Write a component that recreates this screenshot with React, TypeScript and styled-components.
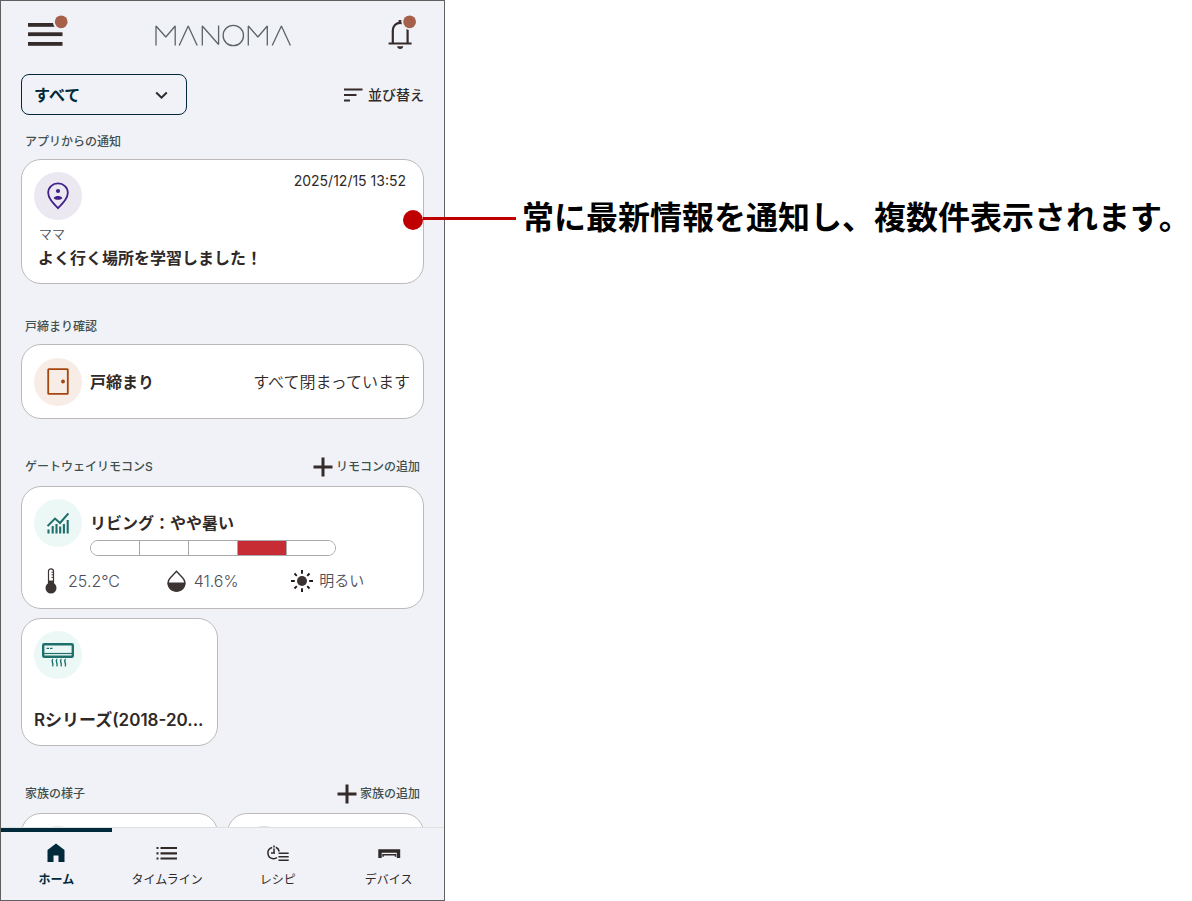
import React from "react";
import styled, { createGlobalStyle } from "styled-components";

const color = {
  page: "#ffffff",
  screen: "#f1f2f7",
  ink: "#2f2928",
  navy: "#00293a",
  label: "#3f504f",
  muted: "#4b505c",
  cardBorder: "#bdb9ba",
  badge: "#a65f4b",
  callout: "#c00000",
  teal: "#1f6f6b",
};

const GlobalStyle = createGlobalStyle`
  *, *::before, *::after { box-sizing: border-box; }
  body {
    margin: 0;
    background: ${color.page};
    color: ${color.ink};
    font-family: Inter, "Noto Sans CJK JP", sans-serif;
    overflow-x: hidden;
  }
  button, select { font: inherit; color: inherit; }
  svg { display: block; flex: none; }
`;

const Page = styled.div`
  display: flex;
  align-items: flex-start;
  height: 100vh;
  overflow: hidden;
`;

const Phone = styled.div`
  flex: 0 0 445px;
  display: flex;
  flex-direction: column;
  height: 100%;
  border: 1px solid #606060;
  background: ${color.screen};
`;

const Header = styled.header`
  display: grid;
  grid-template-columns: 1fr auto 1fr;
  align-items: start;
  height: 73px;
  flex: none;
  padding: 14px 27px 0;
`;

const IconButton = styled.button<{ $end?: boolean }>`
  display: block;
  justify-self: ${(p) => (p.$end ? "end" : "start")};
  padding: 0;
  border: 0;
  background: none;
  cursor: pointer;
`;

const Logo = styled.svg`
  margin-top: 8px;
`;

const Content = styled.main`
  flex: 1;
  min-height: 0;
  padding: 0 20px;
  overflow: hidden auto;
  scrollbar-width: none;
`;

const FilterRow = styled.div`
  display: flex;
  justify-content: space-between;
  align-items: center;
  margin-bottom: 8px;
`;

const SelectBox = styled.label`
  position: relative;
  display: block;
  width: 166px;
  svg {
    position: absolute;
    right: 19px;
    top: 17px;
    pointer-events: none;
  }
`;

const Select = styled.select`
  display: block;
  appearance: none;
  width: 100%;
  height: 41px;
  padding: 0 40px 0 12px;
  border: 1px solid ${color.navy};
  border-radius: 8px;
  background: transparent;
  color: ${color.navy};
  font-size: 16px;
  font-weight: 700;
`;

const SortButton = styled.button`
  display: flex;
  align-items: center;
  gap: 5px;
  padding: 0;
  border: 0;
  background: none;
  font-size: 14px;
  font-weight: 500;
  line-height: 20px;
  cursor: pointer;
`;

const Section = styled.section`
  & + & {
    margin-top: 24px;
  }
`;

const SectionHead = styled.div<{ $action?: boolean }>`
  display: flex;
  justify-content: space-between;
  align-items: center;
  height: ${(p) => (p.$action ? 43 : 36)}px;
  padding: ${(p) => (p.$action ? 5 : 2)}px 4px 0;
`;

const SectionTitle = styled.h2`
  margin: 0;
  color: ${color.label};
  font-size: 12px;
  font-weight: 500;
  line-height: 20px;
`;

const AddButton = styled.button`
  display: flex;
  align-items: center;
  gap: 3px;
  padding: 0;
  border: 0;
  background: none;
  color: ${color.label};
  font-size: 12px;
  font-weight: 500;
  line-height: 20px;
  cursor: pointer;
`;

const Card = styled.article<{ $height: number }>`
  display: flex;
  flex-direction: column;
  min-height: ${(p) => p.$height}px;
  padding: 12px;
  border: 1px solid ${color.cardBorder};
  border-radius: 20px;
  background: #fff;
`;

const CardGrid = styled.div`
  display: grid;
  grid-template-columns: 1fr 1fr;
  gap: 9px;
`;

const GridBelow = styled(CardGrid)`
  margin-top: 9px;
`;

const CardRow = styled.div<{ $top?: boolean }>`
  display: flex;
  align-items: ${(p) => (p.$top ? "flex-start" : "center")};
  gap: 8px;
`;

const DoorRow = styled(CardRow)`
  flex: 1;
  padding-right: 1px;
`;

const IconDisc = styled.span<{ $tint: string }>`
  display: grid;
  place-items: center;
  flex: none;
  width: 48px;
  height: 48px;
  border-radius: 50%;
  background: ${(p) => p.$tint};
`;

const Time = styled.time`
  margin-left: auto;
  padding-right: 5px;
  font-size: 14px;
  line-height: 18px;
`;

const Sender = styled.p`
  margin: 4px 0 0 5px;
  color: ${color.muted};
  font-size: 13px;
  font-weight: 350;
  line-height: 20px;
`;

const Title = styled.h3`
  margin: 0;
  overflow: hidden;
  white-space: nowrap;
  text-overflow: ellipsis;
  font-size: 16px;
  font-weight: 600;
  line-height: 26px;
`;

const MessageTitle = styled(Title)`
  margin-top: 1px;
  padding-left: 4px;
`;

const DeviceTitle = styled(Title)`
  margin-top: auto;
  font-size: 17px;
`;

const Status = styled.span`
  margin-left: auto;
  font-size: 16px;
  font-weight: 350;
  line-height: 26px;
`;

const Comfort = styled.div`
  padding-top: 11px;
`;

const Meter = styled.div`
  display: flex;
  width: 246px;
  height: 16px;
  margin-top: 4px;
  overflow: hidden;
  border: 1px solid #aaa8aa;
  border-radius: 8px;
`;

const MeterStep = styled.span<{ $on?: boolean }>`
  flex: 1;
  background: ${(p) => (p.$on ? "#c72c34" : "#fff")};
  & + & {
    border-left: 1px solid #aaa8aa;
  }
`;

const Readings = styled.ul`
  display: grid;
  grid-template-columns: repeat(3, 1fr);
  margin: 12px 0 0;
  padding: 0;
  list-style: none;
`;

const Reading = styled.li<{ $japanese?: boolean }>`
  display: flex;
  align-items: center;
  gap: 6px;
  padding-left: 6px;
  color: ${color.muted};
  font-size: ${(p) => (p.$japanese ? 15 : 16)}px;
  font-weight: 350;
  line-height: 26px;
`;

const TabBar = styled.nav`
  display: grid;
  grid-template-columns: repeat(4, 1fr);
  flex: none;
  height: 73px;
  border-top: 1px solid #dfe0e4;
`;

const Tab = styled.a<{ $active?: boolean }>`
  display: flex;
  flex-direction: column;
  align-items: center;
  border-top: 4px solid ${(p) => (p.$active ? color.navy : "transparent")};
  padding-top: 9px;
  gap: 5px;
  color: ${(p) => (p.$active ? color.navy : color.ink)};
  font-size: 12px;
  font-weight: ${(p) => (p.$active ? 700 : 400)};
  line-height: 20px;
  text-decoration: none;
`;

const Aside = styled.aside`
  flex: 1;
  min-width: 0;
  padding: 198px 0 0 77px;
`;

const Note = styled.p`
  position: relative;
  margin: 0;
  color: #000;
  font-size: 32px;
  font-weight: 700;
  line-height: 40px;
  white-space: nowrap;
`;

/* Leader line that reaches from the note back over the notification card. */
const Leader = styled.span`
  position: absolute;
  right: calc(100% + 6px);
  top: 12px;
  display: flex;
  align-items: center;
  width: 113px;
  height: 20px;
  &::before {
    content: "";
    width: 20px;
    height: 20px;
    border-radius: 50%;
    background: ${color.callout};
  }
  &::after {
    content: "";
    flex: 1;
    height: 3px;
    margin-bottom: 3px;
    background: ${color.callout};
  }
`;

const MenuIcon = () => (
  <svg width="44" height="34" viewBox="0 0 44 34" aria-hidden="true">
    <g fill="#352b2b">
      <rect y="8" width="34.5" height="3.8" />
      <rect y="17.3" width="34.5" height="3.8" />
      <rect y="27" width="34.5" height="3.8" />
    </g>
    <circle cx="33.2" cy="6.8" r="8.4" fill={color.screen} />
    <circle cx="33.2" cy="6.8" r="6.4" fill={color.badge} />
  </svg>
);

const BellIcon = () => (
  <svg width="30" height="36" viewBox="0 0 30 36" aria-hidden="true">
    <path
      d="M5.8 28.5V15.5C5.8 11 9 7.8 13.2 7.8S20.6 11 20.6 15.5V28.5M1.6 28.5H24.6"
      fill="none"
      stroke="#352b2b"
      strokeWidth="2.2"
    />
    <path d="M11.6 5h3v4h-3zM10.2 31.2h6c0 1.7-1.3 2.8-3 2.8s-3-1.1-3-2.8z" fill="#352b2b" />
    <circle cx="22.6" cy="6.8" r="8.2" fill={color.screen} />
    <circle cx="22.6" cy="6.8" r="6.4" fill={color.badge} />
  </svg>
);

const Brand = () => (
  <Logo width="138" height="24" viewBox="0 0 138 24" role="img" aria-label="MANOMA">
    <g fill="none" stroke="#5b6365" strokeWidth="1.3" strokeLinejoin="bevel">
      <polyline points="2,22.5 2,3 11.8,14 21.2,3 21.2,22.5" />
      <polyline points="25.2,22.5 34.2,3 43.2,22.5" />
      <polyline points="48.3,22.5 48.3,3 64.6,21.5 64.6,2.5" />
      <circle cx="79.3" cy="12.5" r="10.2" />
      <polyline points="94.3,22.5 94.3,3 103.9,14 113.3,3 113.3,22.5" />
      <polyline points="118.2,22.5 127.4,3 136.4,22.5" />
    </g>
  </Logo>
);

const ChevronIcon = () => (
  <svg width="13" height="9" viewBox="0 0 13 9" aria-hidden="true">
    <path d="M1.2 1.5l5.3 5.2 5.3-5.2" fill="none" stroke="#2f2928" strokeWidth="2" />
  </svg>
);

const SortIcon = () => (
  <svg width="19" height="14" viewBox="0 0 19 14" aria-hidden="true">
    <path d="M0 1.5h18.5M0 7h12.5M0 12.5h6" stroke="#352b2b" strokeWidth="2" />
  </svg>
);

const PlusIcon = () => (
  <svg width="20" height="20" viewBox="0 0 20 20" aria-hidden="true">
    <path d="M10 .5v19M.5 10h19" stroke="#352b2b" strokeWidth="3" />
  </svg>
);

const PlaceIcon = () => (
  <svg width="22" height="28" viewBox="0 0 22 28" aria-hidden="true">
    <path
      d="M11 26.2C5 19.8 1.2 15.6 1.2 10.9 1.2 5.4 5.5 1.4 11 1.4s9.8 4 9.8 9.5c0 4.7-3.8 8.9-9.8 15.3z"
      fill="none"
      stroke="#42208a"
      strokeWidth="1.8"
    />
    <circle cx="11" cy="9" r="2.1" fill="#42208a" />
    <path d="M6.6 15.9c1.200-1.400 2.800-1.900 4.400-1.900s3.200.5 4.400 1.900c-1.200 1.400-2.800 1.900-4.400 1.900s-3.200-.5-4.400-1.900z" fill="#42208a" />
  </svg>
);

const DoorIcon = () => (
  <svg width="22" height="27" viewBox="0 0 22 27" aria-hidden="true">
    <rect x="1.2" y="1.2" width="19.6" height="24.6" rx=".6" fill="none" stroke="#a5450f" strokeWidth="1.8" />
    <circle cx="16" cy="13.5" r="1.9" fill="#a5450f" />
  </svg>
);

const ChartIcon = () => (
  <svg width="22" height="22" viewBox="0 0 22 22" aria-hidden="true">
    <path d="M.6 14L8 6.600l5 4.400L21.400 1.400" fill="none" stroke={color.teal} strokeWidth="2" />
    <path
      d="M1.500 21.500v-4M5.700 21.500v-7.500M9.500 21.500v-9.500M13.200 21.500v-7M16.900 21.500v-9.500M20.700 21.500v-13.500"
      stroke={color.teal}
      strokeWidth="2.100"
    />
  </svg>
);

const AirconIcon = () => (
  <svg width="32" height="24" viewBox="0 0 32 24" aria-hidden="true">
    <rect x="1.2" y="1.2" width="29.6" height="12.6" rx="1" fill="none" stroke={color.teal} strokeWidth="2.4" />
    <path d="M2 10.5h28" stroke={color.teal} strokeWidth="1.2" />
    <path d="M4.500 5.300h2.500M8 5.300h2.500" stroke={color.teal} strokeWidth="1.3" />
    <path
      d="M11 16c-3 2.500 1.500 3.800-.4 7.300M15.200 16c-3 2.500 1.500 3.800-.4 7.300M19.400 16c-3 2.500 1.500 3.800-.4 7.300M23.600 16c-3 2.500 1.500 3.800-.4 7.300"
      fill="none"
      stroke={color.teal}
      strokeWidth="1.4"
    />
  </svg>
);

const ThermometerIcon = () => (
  <svg width="22" height="26" viewBox="0 0 22 26" aria-hidden="true">
    <path d="M8.500 17V3.300a2.500 2.500 0 0 1 5 0V17" fill="#fff" stroke="#3b3433" strokeWidth="1.200" />
    <path d="M8 12.500h6V16H8z" fill="#3b3433" />
    <path d="M11.500 4.200H13M11.500 6.800H13M11.500 9.400H13" stroke="#3b3433" strokeWidth="1" />
    <circle cx="11" cy="20" r="5.500" fill="#3b3433" />
  </svg>
);

const HumidityIcon = () => (
  <svg width="22" height="24" viewBox="0 0 22 24" aria-hidden="true">
    <path d="M10.500 2.300L4.200 9C.1 13.800 2.900 22 10.500 22s10.400-8.200 6.300-13z" fill="#fff" stroke="#3b3433" strokeWidth="1.400" />
    <path d="M1.400 13.500h18.200c0 5.300-3.800 9.200-9.100 9.200s-9.100-3.900-9.100-9.200z" fill="#3b3433" />
  </svg>
);

const SunIcon = () => (
  <svg width="22" height="22" viewBox="0 0 22 22" aria-hidden="true">
    <circle cx="11" cy="11" r="5" fill="#3b3433" />
    <path
      d="M11 0v3.800M11 18.200V22M0 11h3.800M18.200 11H22M3.500 3.500l2.300 2.300M16.200 16.200l2.300 2.300M3.500 18.500l2.300-2.300M16.200 5.800l2.300-2.300"
      stroke="#1d1918"
      strokeWidth="1.900"
    />
  </svg>
);

const HomeIcon = () => (
  <svg width="24" height="24" viewBox="0 0 24 24" aria-hidden="true">
    <path d="M3.500 21V9L12 2.500 20.500 9v12h-6v-6.500h-5V21z" fill={color.navy} />
  </svg>
);

const ListIcon = () => (
  <svg width="24" height="24" viewBox="0 0 24 24" aria-hidden="true">
    <path
      d="M1.500 7h2M5.500 7h16.500M1.500 12.300h2M5.500 12.300h16.500M1.500 17.500h2M5.500 17.500h16.500"
      stroke={color.ink}
      strokeWidth="2.200"
    />
  </svg>
);

const RecipeIcon = () => (
  <svg width="24" height="24" viewBox="0 0 24 24" aria-hidden="true">
    <g fill="none" stroke={color.ink} strokeWidth="1.500">
      <path d="M6.200 6.500A5.700 5.700 0 0 0 7.200 17.700q2.200.2 3.800-1.200M9.800 6.300A5.700 5.700 0 0 1 13.200 10.500" />
      <path d="M8 7.500v4.500M5 12h4M8 4.500v2" />
      <path d="M12.500 12.200h10.200M12.500 15.700h10.200M12.500 19.200h10.200" />
    </g>
  </svg>
);

const DeviceIcon = () => (
  <svg width="24" height="24" viewBox="0 0 24 24" aria-hidden="true">
    <path d="M3 17v-7h18.500v7" fill="none" stroke={color.ink} strokeWidth="3.400" />
    <path d="M6 15.800v-2h12.500v2" fill="none" stroke={color.ink} strokeWidth="1.500" />
  </svg>
);

const tabs = [
  { label: "ホーム", icon: <HomeIcon />, active: true },
  { label: "タイムライン", icon: <ListIcon /> },
  { label: "レシピ", icon: <RecipeIcon /> },
  { label: "デバイス", icon: <DeviceIcon /> },
];

const comfortSteps = [0, 1, 2, 3, 4];
const comfortLevel = 3;

export default function App() {
  return (
    <>
      <GlobalStyle />
      <Page>
        <Phone>
          <Header>
            <IconButton type="button" aria-label="メニュー">
              <MenuIcon />
            </IconButton>
            <Brand />
            <IconButton type="button" aria-label="お知らせ" $end>
              <BellIcon />
            </IconButton>
          </Header>

          <Content>
            <FilterRow>
              <SelectBox>
                <Select aria-label="表示" defaultValue="all">
                  <option value="all">すべて</option>
                </Select>
                <ChevronIcon />
              </SelectBox>
              <SortButton type="button">
                <SortIcon />
                並び替え
              </SortButton>
            </FilterRow>

            <Section>
              <SectionHead>
                <SectionTitle>アプリからの通知</SectionTitle>
              </SectionHead>
              <Card $height={125}>
                <CardRow $top>
                  <IconDisc $tint="#ebe8f2">
                    <PlaceIcon />
                  </IconDisc>
                  <Time dateTime="2025-12-15T13:52">2025/12/15 13:52</Time>
                </CardRow>
                <Sender>ママ</Sender>
                <MessageTitle>よく行く場所を学習しました！</MessageTitle>
              </Card>
            </Section>

            <Section>
              <SectionHead>
                <SectionTitle>戸締まり確認</SectionTitle>
              </SectionHead>
              <Card $height={75}>
                <DoorRow>
                  <IconDisc $tint="#f8ece6">
                    <DoorIcon />
                  </IconDisc>
                  <Title>戸締まり</Title>
                  <Status>すべて閉まっています</Status>
                </DoorRow>
              </Card>
            </Section>

            <Section>
              <SectionHead $action>
                <SectionTitle>ゲートウェイリモコンS</SectionTitle>
                <AddButton type="button">
                  <PlusIcon />
                  リモコンの追加
                </AddButton>
              </SectionHead>
              <Card $height={123}>
                <CardRow $top>
                  <IconDisc $tint="#ecf8f6">
                    <ChartIcon />
                  </IconDisc>
                  <Comfort>
                    <Title>リビング：やや暑い</Title>
                    <Meter role="img" aria-label="やや暑い">
                      {comfortSteps.map((step) => (
                        <MeterStep key={step} $on={step === comfortLevel} />
                      ))}
                    </Meter>
                  </Comfort>
                </CardRow>
                <Readings>
                  <Reading>
                    <ThermometerIcon />
                    25.2°C
                  </Reading>
                  <Reading>
                    <HumidityIcon />
                    41.6%
                  </Reading>
                  <Reading $japanese>
                    <SunIcon />
                    明るい
                  </Reading>
                </Readings>
              </Card>
              <GridBelow>
                <Card $height={128}>
                  <IconDisc $tint="#ecf8f6">
                    <AirconIcon />
                  </IconDisc>
                  <DeviceTitle>Rシリーズ(2018-20...</DeviceTitle>
                </Card>
              </GridBelow>
            </Section>

            <Section>
              <SectionHead $action>
                <SectionTitle>家族の様子</SectionTitle>
                <AddButton type="button">
                  <PlusIcon />
                  家族の追加
                </AddButton>
              </SectionHead>
              <CardGrid>
                <Card $height={128}>
                  <IconDisc $tint="#e4e8e8" />
                </Card>
                <Card $height={128}>
                  <IconDisc $tint="#dcdce2" />
                </Card>
              </CardGrid>
            </Section>
          </Content>

          <TabBar>
            {tabs.map((tab) => (
              <Tab
                key={tab.label}
                href="#"
                $active={tab.active}
                aria-current={tab.active ? "page" : undefined}
              >
                {tab.icon}
                {tab.label}
              </Tab>
            ))}
          </TabBar>
        </Phone>

        <Aside>
          <Note>
            <Leader aria-hidden="true" />
            常に最新情報を通知し、複数件表示されます。
          </Note>
        </Aside>
      </Page>
    </>
  );
}
